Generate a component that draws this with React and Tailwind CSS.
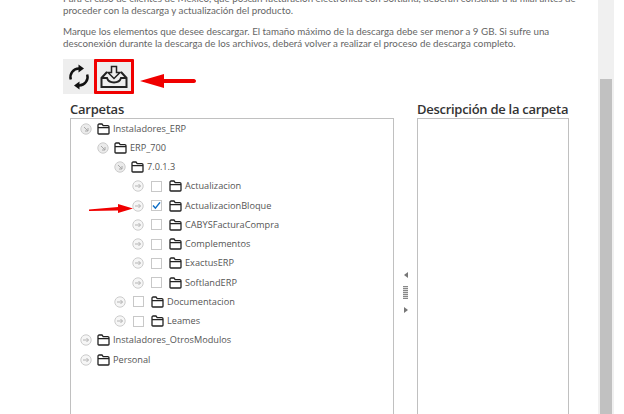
const rows = [
  { name: "Instaladores_ERP", level: 0, open: true },
  { name: "ERP_700", level: 1, open: true },
  { name: "7.0.1.3", level: 2, open: true },
  { name: "Actualizacion", level: 3, check: true },
  { name: "ActualizacionBloque", level: 3, check: true, checked: true },
  { name: "CABYSFacturaCompra", level: 3, check: true },
  { name: "Complementos", level: 3, check: true },
  { name: "ExactusERP", level: 3, check: true },
  { name: "SoftlandERP", level: 3, check: true },
  { name: "Documentacion", level: 2, check: true },
  { name: "Leames", level: 2, check: true },
  { name: "Instaladores_OtrosModulos", level: 0 },
  { name: "Personal", level: 0 },
];

const indent = ["pl-[9px]", "pl-[26px]", "pl-[43px]", "pl-[61px]"];

function Expander({ open }) {
  return (
    <svg width="12" height="12" viewBox="0 0 12 12" fill="none" className="shrink-0">
      <circle cx="6" cy="6" r="5.2" fill={open ? "#ebebeb" : "#f6f6f6"} stroke="#cccccc" />
      {open ? (
        <path d="M4 4l4 4M8 5v3H5" stroke="#a8a8a8" strokeWidth="1" />
      ) : (
        <path d="M3 6h5.5M6.5 4l2 2-2 2" stroke="#b4b4b4" strokeWidth="1" />
      )}
    </svg>
  );
}

function FolderIcon() {
  return (
    <svg width="13" height="12" viewBox="0 0 13 12" fill="none" className="shrink-0">
      <path
        d="M1 10.2V2.2C1 1.500 1.500 1 2.200 1H5l1.200 1.600h4.600c.7 0 1.200.5 1.200 1.200v6.400c0 .5-.4.8-.8.8H1.800c-.4 0-.8-.3-.8-.8zM1 4.600h11"
        stroke="#222"
        strokeWidth="1.300"
      />
    </svg>
  );
}

function TreeRow({ row }) {
  return (
    <div className={`flex items-center h-[19.25px] ${indent[row.level]}`}>
      <Expander open={row.open} />
      {row.check && (
        <span className="ml-[7px] w-[11px] h-[11px] border border-[#c8c8c8] bg-white flex items-center justify-center shrink-0">
          {row.checked && (
            <svg width="9" height="9" viewBox="0 0 9 9" fill="none">
              <path d="M1 4.600l2.400 2.600L8 1.400" stroke="#0f6fc6" strokeWidth="1.500" />
            </svg>
          )}
        </span>
      )}
      <span className={row.check ? "ml-[7px]" : "ml-[5px]"}>
        <FolderIcon />
      </span>
      <span className="ml-[3px] text-[9.2px] text-[#555] whitespace-nowrap">{row.name}</span>
    </div>
  );
}

export default function App() {
  return (
    <div className="w-[624px] h-[414px] overflow-hidden relative flex bg-white font-['Open_Sans',sans-serif]">
      <div className="w-[598px] shrink-0 pl-[63px]">
        <div className="-mt-[8px] text-[9.77px] leading-[12px] text-[#666] w-[500px] font-['Lato',sans-serif]">
          <p className="whitespace-nowrap">Para el caso de clientes de México, que poscan facturación electrónica con Softland, deberán consultar a la filial antes de</p>
          <p>proceder con la descarga y actualización del producto.</p>
          <p className="mt-[9px] whitespace-nowrap">Marque los elementos que desee descargar. El tamaño máximo de la descarga debe ser menor a 9 GB. Si sufre una</p>
          <p className="whitespace-nowrap">desconexión durante la descarga de los archivos, deberá volver a realizar el proceso de descarga completo.</p>
        </div>

        <div className="mt-[10px] flex w-[71px] h-[35px] bg-[#eeeeee]">
          <div className="w-[31px] flex items-center justify-center">
            <svg width="22" height="26" viewBox="0 0 22 26" fill="none">
              <path d="M2.800 15.500A8.500 8.500 0 0 1 11 4.500" stroke="#111" strokeWidth="2.400" />
              <path d="M10.500 .5L16 4.500l-5.500 4z" fill="#111" />
              <path d="M19.200 10.500A8.500 8.500 0 0 1 11 21.500" stroke="#111" strokeWidth="2.400" />
              <path d="M11.500 17.500L6 21.500l5.500 4z" fill="#111" />
            </svg>
          </div>
          <div className="w-[40px] border-[3px] border-[#f00000] rounded-[1px] flex items-center justify-center">
            <svg width="28" height="24" viewBox="0 0 28 24" fill="none">
              <path d="M11.500 1.500h5v6h3.500L14 13.500 8 7.500h3.500z" stroke="#222" strokeWidth="1.500" />
              <path d="M7 7L1.500 13v9h25v-9L21 7" stroke="#222" strokeWidth="2" />
              <path d="M1.500 13H7c1 3 3 4.500 7 4.500s6-1.500 7-4.500h5.500" stroke="#222" strokeWidth="2" />
            </svg>
          </div>
        </div>

        <div className="mt-[6px] ml-[7px] flex">
          <div className="w-[324px] shrink-0">
            <div className="text-[13px] tracking-[-0.25px] leading-[18px] font-semibold text-[#333]">Carpetas</div>
            <div className="h-[320px] border border-[#c0c0c0]">
              {rows.map((row) => (
                <TreeRow key={row.name} row={row} />
              ))}
            </div>
          </div>
          <div className="w-[23px] shrink-0 flex flex-col items-center gap-[8px] pt-[172px]">
            <span className="w-0 h-0 border-y-[3px] border-y-transparent border-r-[4px] border-r-[#777]" />
            <span className="w-[5px] h-[13px] bg-[repeating-linear-gradient(#888_0,#888_1px,#ddd_1px,#ddd_2px)]" />
            <span className="w-0 h-0 border-y-[3px] border-y-transparent border-l-[4px] border-l-[#777]" />
          </div>
          <div className="w-[152px] shrink-0">
            <div className="text-[13px] tracking-[-0.28px] leading-[18px] font-semibold text-[#333] whitespace-nowrap">Descripción de la carpeta</div>
            <div className="h-[320px] border border-[#c0c0c0]" />
          </div>
        </div>
      </div>

      <div className="w-[16px] h-full bg-[#f0f0f0] px-[2px] pt-[79px]">
        <div className="h-full bg-[#c1c1c1]" />
      </div>

      {/* flechas rojas de la captura */}
      <svg className="absolute left-[138px] top-[70px]" width="60" height="20" viewBox="0 0 60 20">
        <path d="M2 11L26 4v5h30c1 0 2 1 2 2s-1 2-2 2H26v5z" fill="#f00000" />
      </svg>
      <svg className="absolute left-[88px] top-[202px]" width="46" height="14" viewBox="0 0 46 14">
        <path d="M1 7.500L30 5V2l15 4.500L30 11V8.500L1 9z" fill="#f00000" />
      </svg>
    </div>
  );
}
